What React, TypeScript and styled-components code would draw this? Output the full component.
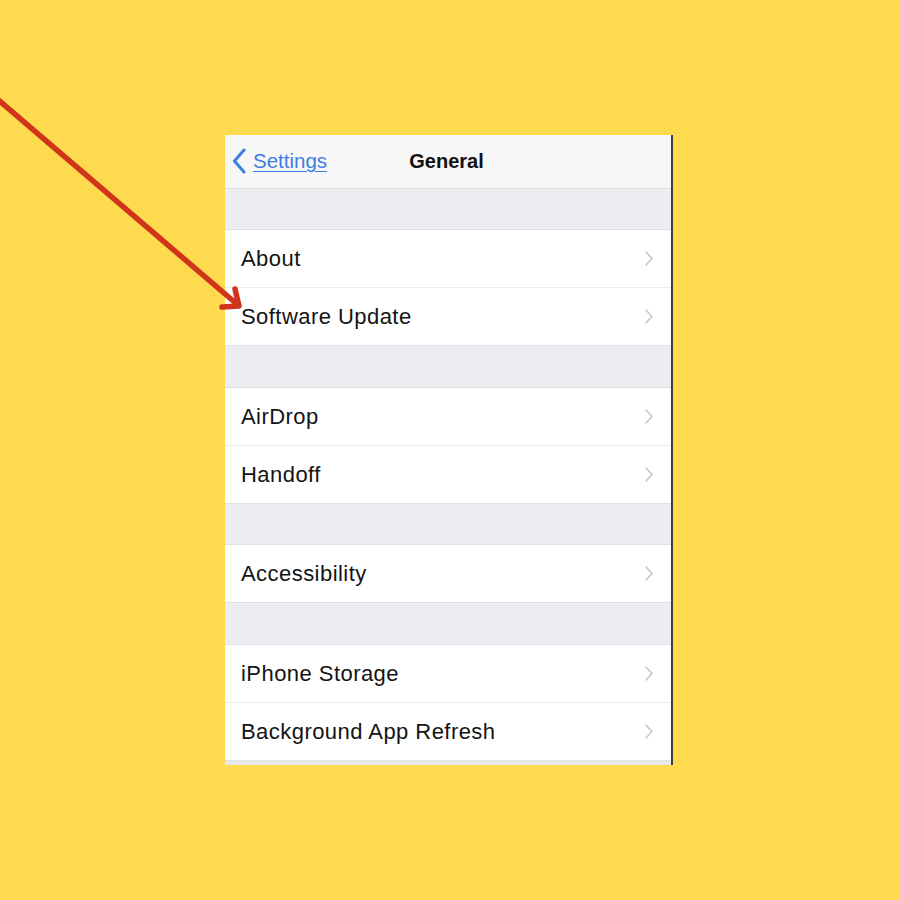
import React, { FC } from "react";
import styled, { createGlobalStyle } from "styled-components";

const GlobalStyle = createGlobalStyle`
  html, body {
    margin: 0;
    padding: 0;
    background: #fedb4e;
  }
  body {
    font-family: "Liberation Sans", Arial, sans-serif;
  }
`;

interface Section {
  gap: number;
  items: string[];
}

const sections: Section[] = [
  { gap: 42, items: ["About", "Software Update"] },
  { gap: 43, items: ["AirDrop", "Handoff"] },
  { gap: 42, items: ["Accessibility"] },
  { gap: 43, items: ["iPhone Storage", "Background App Refresh"] },
];

const Chevron: FC = () => (
  <svg width="10" height="17" viewBox="0 0 10 17">
    <path
      d="M2 2 L8 8.5 L2 15"
      fill="none"
      stroke="#c6c6ca"
      strokeWidth="1.6"
      strokeLinecap="round"
      strokeLinejoin="round"
    />
  </svg>
);

const BackChevron: FC = () => (
  <svg width="14" height="26" viewBox="0 0 14 26">
    <path
      d="M12 2 L2.5 13 L12 24"
      fill="none"
      stroke="#3d7fe0"
      strokeWidth="3"
      strokeLinecap="round"
      strokeLinejoin="round"
    />
  </svg>
);

const App: FC = () => {
  return (
    <Page>
      <GlobalStyle />
      <Phone>
        <NavBar>
          <BackLink>
            <BackChevron />
            <span>Settings</span>
          </BackLink>
          <Title>General</Title>
        </NavBar>
        {sections.map((section, si) => (
          <React.Fragment key={si}>
            <Spacer $height={section.gap} />
            <Group>
              {section.items.map((label) => (
                <Row key={label}>
                  <Label>{label}</Label>
                  <Chevron />
                </Row>
              ))}
            </Group>
          </React.Fragment>
        ))}
        <BottomStrip />
      </Phone>
      <ArrowLayer width="900" height="900" viewBox="0 0 900 900">
        <g
          fill="none"
          stroke="#d0351b"
          strokeWidth="5.5"
          strokeLinecap="round"
          strokeLinejoin="round"
        >
          <line x1="-4" y1="98" x2="238" y2="305" />
          <polyline points="235,289 239,306 222,307" />
        </g>
      </ArrowLayer>
    </Page>
  );
};

export default App;

const Page = styled.div`
  position: relative;
  width: 900px;
  height: 900px;
  overflow: hidden;
  background: #fedb4e;
  padding: 135px 0 0 225px;
  box-sizing: border-box;
`;

const Phone = styled.div`
  width: 446px;
  background: #efeff4;
  border-right: 2px solid #3d3d3d;
  display: flex;
  flex-direction: column;
`;

const NavBar = styled.div`
  position: relative;
  height: 53px;
  background: #f7f7f8;
  display: flex;
  align-items: center;
  justify-content: center;
  box-sizing: border-box;
`;

const BackLink = styled.div`
  position: absolute;
  left: 7px;
  top: 13px;
  display: flex;
  align-items: center;
  gap: 7px;
  color: #3d7fe0;
  font-size: 20.5px;

  span {
    text-decoration: underline;
    text-underline-offset: 3px;
    text-decoration-thickness: 1px;
  }
`;

const Title = styled.div`
  font-size: 20px;
  font-weight: 700;
  color: #111;
  margin-left: -3px;
`;

const Spacer = styled.div<{ $height: number }>`
  height: ${(p) => p.$height}px;
  background: #ececf1;
  border-top: 1px solid #e0e0e4;
  border-bottom: 1px solid #e0e0e4;
  box-sizing: border-box;
`;

const Group = styled.div`
  background: #fff;
  display: flex;
  flex-direction: column;
  gap: 1px;
  background: #ececef;
`;

const Row = styled.div`
  height: 57px;
  display: flex;
  align-items: center;
  justify-content: space-between;
  padding: 0 17px 0 16px;
  box-sizing: border-box;
  background: #fff;
`;

const Label = styled.span`
  font-size: 22px;
  letter-spacing: 0.45px;
  color: #141414;
  margin-top: 1px;
`;

const BottomStrip = styled.div`
  height: 5px;
  background: #e8e8ed;
  border-top: 1px solid #e0e0e4;
  box-sizing: border-box;
`;

const ArrowLayer = styled.svg`
  position: absolute;
  left: 0;
  top: 0;
  pointer-events: none;
`;
